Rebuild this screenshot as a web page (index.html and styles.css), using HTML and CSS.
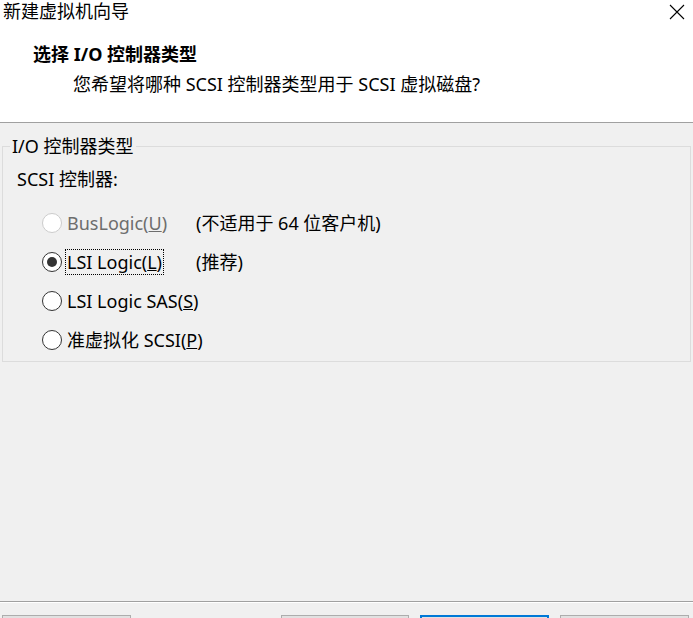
FILE: index.html
```html
<html>
  <head>
    <meta charset="UTF-8" />
    <title>新建虚拟机向导</title>
    <link rel="stylesheet" href="styles.css">
  </head>
  <body>
    <div class="dialog">
      <div class="header">
        <div class="title_bar">
          <span class="title">新建虚拟机向导</span>
          <svg class="close" width="16" height="16" viewBox="0 0 16 16">
            <path d="M1 1 L15 15 M15 1 L1 15" stroke="#000" stroke-width="1.1" fill="none" />
          </svg>
        </div>
        <div class="heading">选择 I/O 控制器类型</div>
        <div class="sub">您希望将哪种 SCSI 控制器类型用于 SCSI 虚拟磁盘?</div>
      </div>
      <div class="content">
        <fieldset class="group">
          <legend>I/O 控制器类型</legend>
          <div class="group_label">SCSI 控制器:</div>
          <div class="option disabled">
            <span class="radio"></span>
            <span class="opt_text">BusLogic(<u>U</u>)</span>
            <span class="note">(不适用于 64 位客户机)</span>
          </div>
          <div class="option">
            <span class="radio checked"></span>
            <span class="opt_text"><span class="focus">LSI Logic(<u>L</u>)</span></span>
            <span class="note">(推荐)</span>
          </div>
          <div class="option">
            <span class="radio"></span>
            <span class="opt_text">LSI Logic SAS(<u>S</u>)</span>
          </div>
          <div class="option">
            <span class="radio"></span>
            <span class="opt_text">准虚拟化 SCSI(<u>P</u>)</span>
          </div>
        </fieldset>
      </div>
      <div class="footer">
        <div class="footer_inner">
          <div class="btn"></div>
          <div class="btn_space"></div>
          <div class="btn"></div>
          <div class="btn default"></div>
          <div class="btn"></div>
        </div>
      </div>
    </div>
  </body>
</html>
```
FILE: styles.css
```css
* {
  margin: 0;
  padding: 0;
  box-sizing: border-box;
}
body {
  font-family: "Noto Sans", "Noto Sans CJK SC", sans-serif;
  font-size: 18px;
  color: #000;
  background: #f0f0f0;
  width: 693px;
  height: 618px;
  overflow: hidden;
}
.dialog {
  display: flex;
  flex-direction: column;
  height: 618px;
}
.dialog > div {
  flex-shrink: 0;
}
.header {
  background: #fff;
  height: 123px;
  border-bottom: 1px solid #a0a0a0;
}
.title_bar {
  display: flex;
  justify-content: space-between;
  align-items: center;
  height: 22px;
  padding-left: 3px;
}
.title {
  line-height: 22px;
}
.close {
  margin-right: 8px;
  margin-top: 2px;
}
.heading {
  margin-top: 21px;
  padding-left: 33px;
  line-height: 22px;
  font-weight: bold;
}
.sub {
  margin-top: 8px;
  padding-left: 73px;
  line-height: 22px;
}
.content {
  height: 478px;
  padding: 13px 2px 0;
}
.group {
  border: 1px solid #dcdcdc;
  padding: 0 0 2px;
}
.group legend {
  margin-left: 7px;
  padding: 0 2px;
  line-height: 20px;
}
.group_label {
  padding: 13px 0 0 14px;
  line-height: 20px;
  margin-bottom: 14px;
}
.option {
  display: flex;
  align-items: center;
  height: 39px;
  padding-left: 39px;
  white-space: nowrap;
}
.radio {
  flex-shrink: 0;
  width: 20px;
  height: 20px;
  border: 1px solid #333;
  border-radius: 50%;
  background: #fff;
  display: flex;
  align-items: center;
  justify-content: center;
  margin-right: 5px;
}
.radio.checked::after {
  content: "";
  width: 10px;
  height: 10px;
  border-radius: 50%;
  background: #333;
}
.disabled .radio {
  border-color: #cccccc;
}
.disabled .opt_text {
  color: #6d6d6d;
}
.opt_text {
  min-width: 129px;
  line-height: 22px;
}
.focus {
  outline: 1px dotted #000;
  outline-offset: 0;
  padding: 0 1px;
  margin-left: -1px;
}
.note {
  line-height: 22px;
}
.footer {
  border-top: 1px solid #a0a0a0;
}
.footer_inner {
  border-top: 1px solid #fff;
  display: flex;
  padding: 12px 4px 0 2px;
}
.btn {
  width: 129px;
  height: 32px;
  background: #e1e1e1;
  border: 1px solid #adadad;
}
.btn_space {
  width: 150px;
}
.btn.default {
  border: 2px solid #0078d7;
  margin-left: 11px;
}
.btn:last-child {
  margin-left: 11px;
}
```
